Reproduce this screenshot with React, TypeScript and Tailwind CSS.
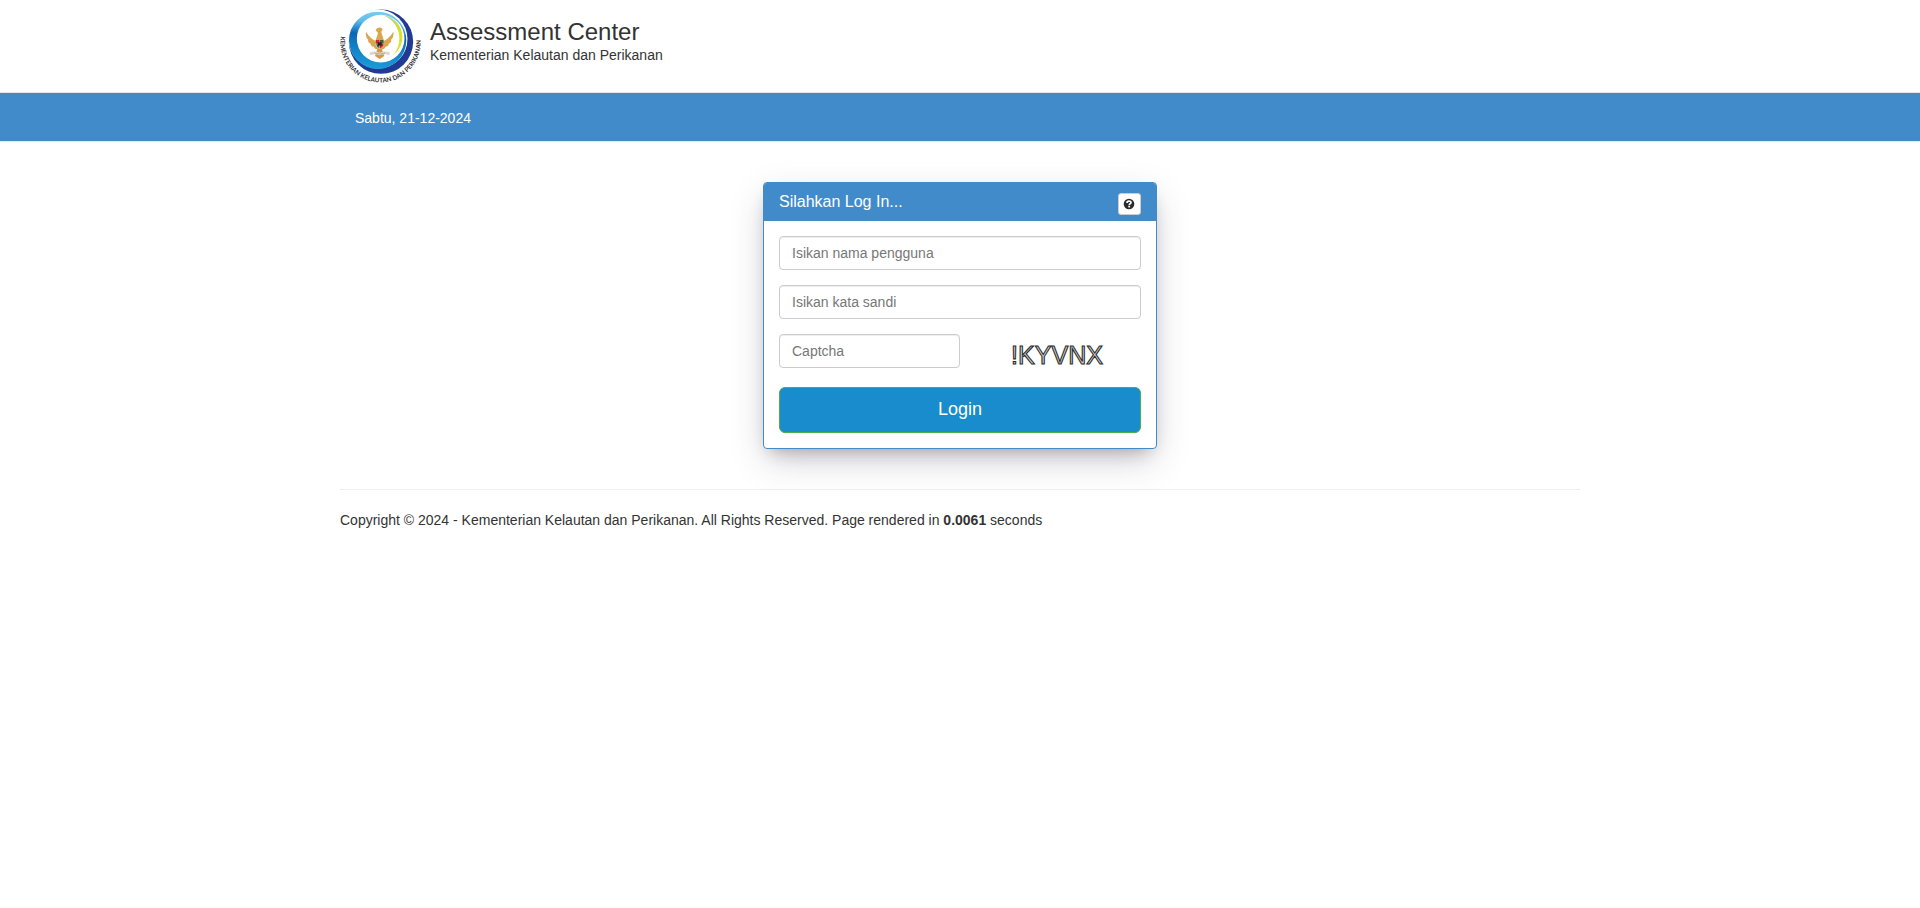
import React from "react";

function Logo() {
  return (
    <svg width="83" height="78" viewBox="30 21 249 234" className="shrink-0">
      <defs>
        <linearGradient id="ring" x1="0.6" y1="0" x2="0.5" y2="1">
          <stop offset="0" stopColor="#7accf5" />
          <stop offset="0.2" stopColor="#5bbcee" />
          <stop offset="0.42" stopColor="#0a66b4" />
          <stop offset="0.65" stopColor="#1080c6" />
          <stop offset="1" stopColor="#1c9bd8" />
        </linearGradient>
        <linearGradient id="lime" x1="0" y1="0" x2="0" y2="1">
          <stop offset="0" stopColor="#a5d8a0" />
          <stop offset="0.35" stopColor="#d5e021" />
          <stop offset="1" stopColor="#dfe53a" />
        </linearGradient>
        <path id="motto" d="M32.500 109 A120.500 120.500 0 1 0 270.500 107" />
      </defs>
      <circle cx="153" cy="125" r="96.500" fill="#213a93" />
      <circle cx="144" cy="117" r="88.500" fill="#fff" />
      <circle cx="143" cy="121" r="86" fill="url(#ring)" />
      <circle cx="152" cy="116" r="71.500" fill="#fff" />
      <path d="M160 46 A66 66 0 0 1 188 166 A74 74 0 0 0 160 46Z" fill="url(#lime)" />
      <g fill="#d9a74d">
        <path d="M140 124 C127 119 119 112 108 95 C106 108 111 116 115 119 C112 123 118 130 122 131 C121 137 128 141 132 140 C132 146 139 149 143 147Z" />
        <path d="M158 124 C171 119 179 112 190 95 C192 108 187 116 183 119 C186 123 180 130 176 131 C177 137 170 141 166 140 C166 146 159 149 155 147Z" />
        <path d="M137 91 C141 81 153 80 158 88 L154 96 L161 119 L154 151 L143 151 L138 118 L144 99Z" />
        <path d="M143 145 L155 145 L163 168 L149 177 L135 168Z" fill="#cf9c4a" />
      </g>
      <path d="M119 157 Q135 152 149 158 Q164 152 180 157 L178 166 Q163 160 149 166 Q136 160 121 166Z" fill="#ded6cb" />
      <path d="M133 159 Q149 165 166 159" fill="none" stroke="#a99883" strokeWidth="2" />
      <path d="M137 120 H161 V134 Q158 143 149 147 Q140 143 137 134Z" fill="#fff" />
      <path d="M137 120 H149 V131 H137Z M149 132 H161 Q160 141 149 146Z" fill="#d4232b" />
      <path d="M150 120 H161 V131 H150Z M138 133 H148 V145 Q140 142 138 133Z" fill="#3d633b" />
      <path d="M143 127 H155 V137 H143Z" fill="#262323" />
      <text fill="#2f2d32" fontFamily="Lato, 'Liberation Sans', sans-serif" fontSize="19" fontWeight="700">
        <textPath href="#motto" textLength="404" lengthAdjust="spacing">KEMENTERIAN KELAUTAN DAN PERIKANAN</textPath>
      </text>
    </svg>
  );
}

function QuestionIcon() {
  return (
    <svg width="12" height="12" viewBox="0 0 12 12" className="mr-px mb-px">
      <circle cx="6" cy="6" r="5.300" fill="#2b2b2b" />
      <path d="M4 4.900 C4 2.500 8 2.500 8 4.600 C8 5.900 6.200 5.700 6.200 7.200" fill="none" stroke="#fff" strokeWidth="1.700" />
      <rect x="5.300" y="7.900" width="1.800" height="1.500" fill="#fff" />
    </svg>
  );
}

const field =
  "block h-[34px] rounded-[4px] border border-[#ccc] bg-white px-3 text-sm text-[#555] shadow-[inset_0_1px_1px_rgba(0,0,0,0.075)] outline-none placeholder:text-[#777]";

export default function App() {
  return (
    <div className="min-h-screen bg-white font-['Liberation_Sans',Arial,sans-serif] text-sm leading-5 text-[#333]">
      <header className="mx-auto flex h-[92px] w-[1240px] pt-[7px]">
        <Logo />
        <div className="ml-[7px] pt-[11px]">
          <h1 className="text-2xl leading-[27px]">Assessment Center</h1>
          <p className="leading-5">Kementerian Kelautan dan Perikanan</p>
        </div>
      </header>

      <nav className="h-[50px] border-y border-[#e7e7e7] bg-[#428bca]">
        <p className="mx-auto w-[1240px] px-[15px] pt-[15px] text-white">Sabtu, 21-12-2024</p>
      </nav>

      <main className="mx-auto w-[1240px] pt-10">
        <section className="mx-auto h-[267px] w-[394px] rounded-[4px] border border-[#428bca] bg-white shadow-[0_13px_33px_-4px_rgba(50,50,80,0.26),0_8px_16px_-8px_rgba(0,0,0,0.3)]">
          <div className="flex h-[38px] justify-between rounded-t-[3px] bg-[#428bca] px-[15px] pt-[10px] text-white">
            <h2 className="text-base leading-[17px]">Silahkan Log In...</h2>
            <button className="flex h-[22px] w-[23px] items-center justify-center rounded-[3px] border border-[#ccc] bg-white">
              <QuestionIcon />
            </button>
          </div>
          <form className="px-[15px] pt-[15px]">
            <input className={field + " w-full"} placeholder="Isikan nama pengguna" />
            <input className={field + " mt-[15px] w-full"} placeholder="Isikan kata sandi" />
            <div className="mt-[15px] flex">
              <input className={field + " w-[181px]"} placeholder="Captcha" />
              <svg width="181" height="40" className="shrink-0" aria-label="captcha">
                <text x="51" y="30" fontFamily="'Liberation Sans', Arial, sans-serif" fontSize="26" textLength="92" lengthAdjust="spacingAndGlyphs" fill="#d2d2d2" stroke="#2b2b2b" strokeWidth="1.100">
                  !KYVNX
                </text>
              </svg>
            </div>
            <button type="button" className="mt-[13px] h-[46px] w-full rounded-[6px] border border-[#4cae4c] bg-[#188ccc] pb-[2px] text-lg leading-6 text-white">
              Login
            </button>
          </form>
        </section>
        <footer className="mt-10 border-t border-[#eee] pt-5">
          Copyright © 2024 - Kementerian Kelautan dan Perikanan. All Rights Reserved. Page rendered in <strong>0.0061</strong> seconds
        </footer>
      </main>
    </div>
  );
}
